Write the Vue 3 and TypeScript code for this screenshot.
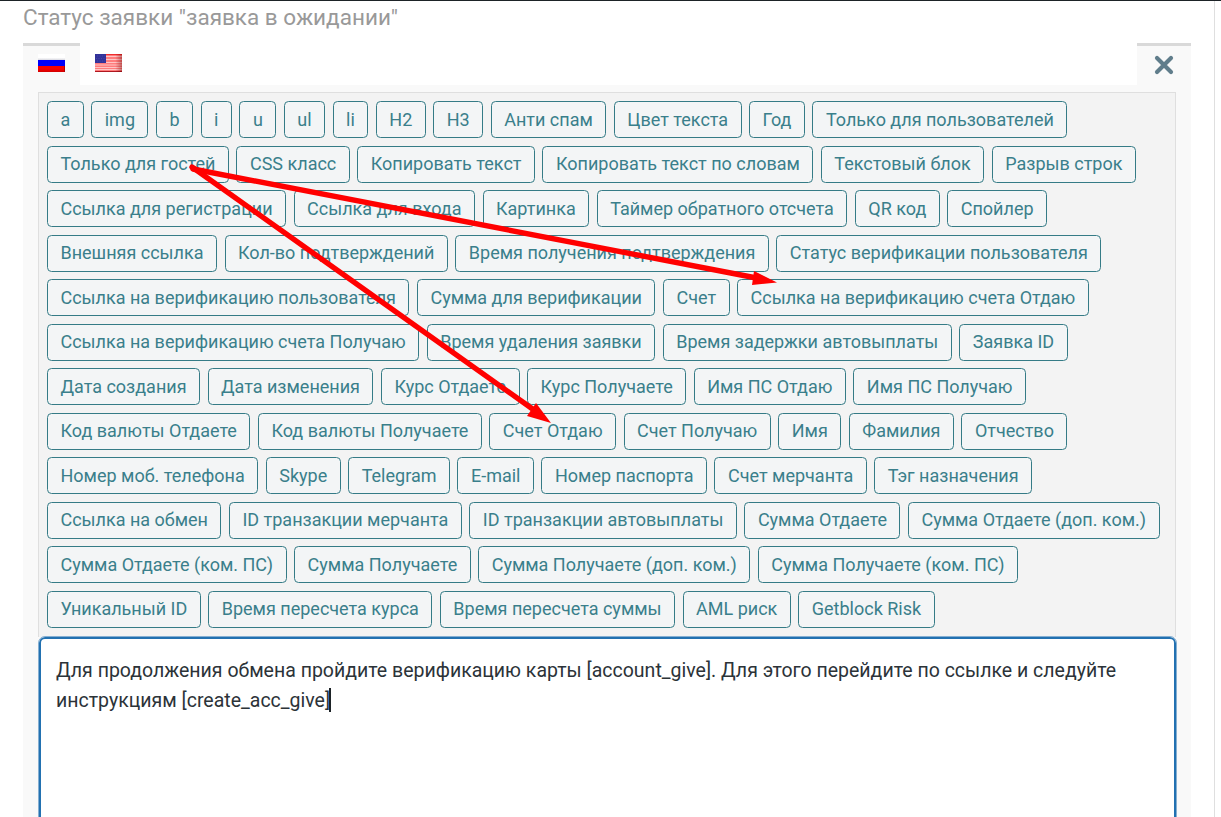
<script setup lang="ts">
const rows: string[][] = [
  ['a', 'img', 'b', 'i', 'u', 'ul', 'li', 'H2', 'H3', 'Анти спам', 'Цвет текста', 'Год', 'Только для пользователей'],
  ['Только для гостей', 'CSS класс', 'Копировать текст', 'Копировать текст по словам', 'Текстовый блок', 'Разрыв строк'],
  ['Ссылка для регистрации', 'Ссылка для входа', 'Картинка', 'Таймер обратного отсчета', 'QR код', 'Спойлер'],
  ['Внешняя ссылка', 'Кол-во подтверждений', 'Время получения подтверждения', 'Статус верификации пользователя'],
  ['Ссылка на верификацию пользователя', 'Сумма для верификации', 'Счет', 'Ссылка на верификацию счета Отдаю'],
  ['Ссылка на верификацию счета Получаю', 'Время удаления заявки', 'Время задержки автовыплаты', 'Заявка ID'],
  ['Дата создания', 'Дата изменения', 'Курс Отдаете', 'Курс Получаете', 'Имя ПС Отдаю', 'Имя ПС Получаю'],
  ['Код валюты Отдаете', 'Код валюты Получаете', 'Счет Отдаю', 'Счет Получаю', 'Имя', 'Фамилия', 'Отчество'],
  ['Номер моб. телефона', 'Skype', 'Telegram', 'E-mail', 'Номер паспорта', 'Счет мерчанта', 'Тэг назначения'],
  ['Ссылка на обмен', 'ID транзакции мерчанта', 'ID транзакции автовыплаты', 'Сумма Отдаете', 'Сумма Отдаете (доп. ком.)'],
  ['Сумма Отдаете (ком. ПС)', 'Сумма Получаете', 'Сумма Получаете (доп. ком.)', 'Сумма Получаете (ком. ПС)'],
  ['Уникальный ID', 'Время пересчета курса', 'Время пересчета суммы', 'AML риск', 'Getblock Risk'],
]
</script>

<template>
  <main class="page">
    <div class="content">
      <h1 class="title">Статус заявки "заявка в ожидании"</h1>
      <div class="tabs">
        <div class="tab active">
          <svg class="flag" width="27" height="18" viewBox="0 0 27 18">
            <defs>
              <linearGradient id="ru-white" x1="0" y1="0" x2="0" y2="1">
                <stop offset="0.6" stop-color="#fff" /><stop offset="1" stop-color="#d8d8e0" />
              </linearGradient>
              <linearGradient id="ru-red" x1="0" y1="0" x2="0" y2="1">
                <stop offset="0.5" stop-color="#f80000" /><stop offset="1" stop-color="#d00000" />
              </linearGradient>
            </defs>
            <rect width="27" height="6" fill="url(#ru-white)" />
            <rect y="6" width="27" height="6" fill="#0000fa" />
            <rect y="12" width="27" height="6" fill="url(#ru-red)" />
            <path d="M26.5 12v6" stroke="#b00000" />
          </svg>
        </div>
        <div class="tab">
          <svg class="flag" width="27" height="18" viewBox="0 0 27 18">
            <defs>
              <linearGradient id="us-shade" x1="0" y1="0" x2="1" y2="0">
                <stop offset="0.75" stop-color="#600" stop-opacity="0" /><stop offset="1" stop-color="#600" stop-opacity=".4" />
              </linearGradient>
            </defs>
            <rect width="27" height="18" fill="#ff7c7c" />
            <path d="M0 .5h27" stroke="#f02c2c" />
            <path d="M11 2.5h16M11 5.5h16M11 8.5h16M0 11h27M0 13.5h27M0 15.5h27" stroke="#ffc4c4" />
            <path d="M0 17.5h27" stroke="#b01820" />
            <rect width="27" height="18" fill="url(#us-shade)" />
            <rect width="11" height="9" fill="#32329a" />
            <path d="M2 2h8M1 4.5h9M2 7h8" stroke="#4c4ca8" stroke-width=".8" stroke-dasharray="1 1.5" />
          </svg>
        </div>
        <div class="close">
          <svg width="20" height="20" viewBox="0 0 20 20">
            <path d="M3 3l14 14M17 3L3 17" stroke="#607d8b" stroke-width="4.2" stroke-linecap="round" />
          </svg>
        </div>
      </div>
      <div class="panel">
        <div class="toolbar">
          <div v-for="(row, i) in rows" :key="i" class="row">
            <button v-for="label in row" :key="label" class="tag">{{ label }}</button>
          </div>
        </div>
        <div class="editor">Для продолжения обмена пройдите верификацию карты [account_give]. Для этого перейдите по ссылке и следуйте инструкциям [create_acc_give]<span class="caret"></span></div>
      </div>
    </div>
    <svg class="arrows" width="1221" height="817" viewBox="0 0 1221 817">
      <g stroke="#f00" stroke-width="5.4" stroke-linecap="round" fill="none">
        <path d="M193 169L754 277.5" />
        <path d="M192 167L534 410" />
      </g>
      <path d="M754 271L777 282.5L752 285Z" fill="#f00" />
      <path d="M536 403L551 423L527 416Z" fill="#f00" />
    </svg>
  </main>
</template>

<style>
body { margin: 0; overflow: hidden; background: #fff; }
</style>

<style scoped>
.page {
  position: relative;
  box-sizing: border-box;
  width: 1221px;
  height: 817px;
  overflow: hidden;
  border-top: 1px solid #1d2327;
  font-family: Roboto, "Liberation Sans", sans-serif;
}
.content {
  box-sizing: border-box;
  width: 1215px;
  height: 816px;
  padding-left: 23px;
  border-right: 1px solid #dfdfdf;
}
.title {
  margin: 0;
  height: 42px;
  line-height: 32px;
  font-size: 22.5px;
  font-weight: 400;
  color: #999;
  white-space: nowrap;
}
.tabs { display: flex; width: 1168px; height: 42px; }
.tab {
  box-sizing: border-box;
  width: 57px;
  height: 42px;
  padding: 8px 15px 0;
  border-top: 3px solid transparent;
}
.tab.active { background: #f9f9f9; border-color: #d9d9d9; }
.flag { display: block; }
.close {
  box-sizing: border-box;
  width: 54px;
  height: 42px;
  margin-left: auto;
  padding: 9px 17px 0;
  border-top: 3px solid #d9d9d9;
  background: #f9f9f9;
}
.close svg { display: block; }
.panel {
  box-sizing: border-box;
  width: 1168px;
  height: 732px;
  padding: 7px 14px 0 15px;
  background: #f9f9f9;
}
.toolbar {
  box-sizing: border-box;
  width: 1138px;
  height: 545px;
  padding: 8px 0 0 7.97px;
  border: 1px solid #dfdfdf;
  border-bottom: 0;
  background: #f3f3f3;
}
.row { display: flex; gap: 7.5px; height: 37px; margin-bottom: 7.5px; }
.tag {
  box-sizing: border-box;
  flex: none;
  height: 37px;
  margin: 0;
  padding: .4px 12.485px 0;
  border: 1px solid #357b86;
  border-radius: 4.5px;
  background: #f3f5f6;
  color: #3a7f8b;
  font-family: inherit;
  font-size: 18px;
  line-height: 34px;
  white-space: nowrap;
}
.editor {
  box-sizing: border-box;
  width: 1137px;
  height: 200px;
  margin-left: 1px;
  padding: 17px 15px;
  border: 2px solid #2271b1;
  border-radius: 6px;
  outline: 1px solid #85afd2;
  outline-offset: 0;
  background: #fff;
  color: #2c3338;
  font-size: 19.5px;
  line-height: 30px;
}
.caret {
  display: inline-block;
  width: 2px;
  height: 24px;
  margin-left: -1px;
  vertical-align: -5px;
  background: #1d2327;
}
.arrows { position: absolute; left: 0; top: -1px; pointer-events: none; }
</style>
